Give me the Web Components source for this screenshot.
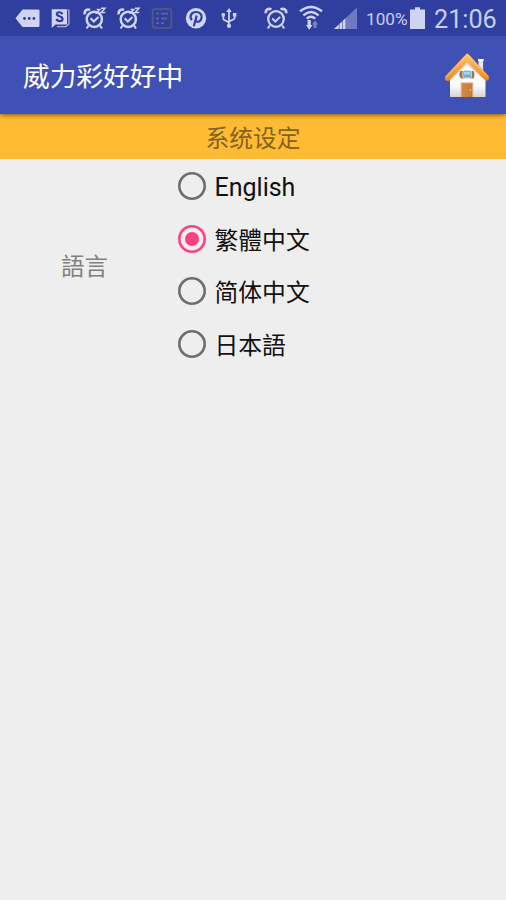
<!DOCTYPE html>
<html lang="zh">
<head>
<meta charset="utf-8">
<title>威力彩好好中</title>
<style>
html,body{margin:0;height:100%}
body{font-family:Roboto,"Noto Sans CJK SC",sans-serif;background:#eee}
</style>
</head>
<body>
<settings-screen></settings-screen>
<script>
const CLOCK = `<circle cx="12" cy="13" r="7.8" fill="none" stroke="currentColor" stroke-width="2.3"/>
<path d="M8.3 12.5l3 3 4.8-4.6M5.8 19.5l-2 3M18.2 19.5l2 3" fill="none" stroke="currentColor" stroke-width="2"/>
<path d="M1.9 7.2C1.2 3.8 4.5 1.9 7.4 3.4M22.1 7.2C22.8 3.8 19.5 1.9 16.6 3.4" fill="none" stroke="currentColor" stroke-width="2.6"/>`;
const SNOOZE = `<circle cx="11.3" cy="13.3" r="7.6" fill="none" stroke="currentColor" stroke-width="2.5"/>
<path d="M7.6 12.3l3.2 3.2 4.7-4.4M5.6 19.5l-2 3M17 19.5l2 3" fill="none" stroke="currentColor" stroke-width="2.1"/>
<path d="M1.8 8.4C1 4.8 4 2.4 7 4" fill="none" stroke="currentColor" stroke-width="2.6"/>
<path d="M13.6 3.6h3.2L13.6 7h3.4M18 2.2h4l-4 4.4h4.2" fill="none" stroke="currentColor" stroke-width="1.5"/>`;
const ICONS = {
  more: `<path d="M0 12L7 3.2h15.7q1.3 0 1.3 1.3v15q0 1.3-1.3 1.3H7z" transform="translate(-.5 .3)" fill="currentColor"/><g fill="#303f9f"><circle cx="8.5" cy="12.5" r="1.4"/><circle cx="13.2" cy="12.5" r="1.4"/><circle cx="17.9" cy="12.5" r="1.4"/></g>`,
  sheet: `<path d="M18.5 4.2h1.4V18l-3 2.6H8" fill="none" stroke="currentColor" stroke-width="1.3" opacity=".75"/><path d="M2.7 3.2H18v15.3H6.5l-3.8 3.6z" fill="currentColor"/><path d="M13.3 8.2c-.8-2.7-5.4-2.5-5.4-.2 0 2.8 5.6 1.8 5.6 5 0 2.8-5.1 3-6-.1" fill="none" stroke="#303f9f" stroke-width="2.2"/>`,
  snooze: SNOOZE,
  note: `<rect x="2.7" y="2.9" width="18.6" height="19" rx="2.5" fill="none" stroke="#4e5684" stroke-width="2"/><path d="M6 7.7h3M11 7.7h7M6 12.5h3M11 12.5h6M6 17.2h3M11 17.2h3" stroke="#5f6697" stroke-width="1.8"/>`,
  pin: `<circle cx="12" cy="12.3" r="10.2" fill="currentColor"/><path d="M7.8 14.2C4.8 10.2 7.5 6 12 6c4 0 6.2 2.6 5.6 5.7-.6 3.8-4 5.2-5.8 3.1M12.7 9.5L9.8 20.2" fill="none" stroke="#303f9f" stroke-width="2.2"/>`,
  usb: `<path d="M12 5v14M6.3 9v3.2q0 1.2 1 1.8L12 16.5M17.7 8.5v3q0 1.2-1 1.8L12 15.5" fill="none" stroke="currentColor" stroke-width="1.8"/><path d="M12 2l2.8 4.1H9.2z" fill="currentColor"/><circle cx="6.3" cy="8.8" r="1.9" fill="currentColor"/><rect x="15.9" y="7" width="3.5" height="3.5" fill="currentColor"/><circle cx="12" cy="19.9" r="2.1" fill="currentColor"/>`,
  alarm: CLOCK,
  wifi: `<g fill="none" stroke="currentColor" stroke-width="2.4"><path d="M1 5.3Q12-3.5 23 5.3"/><path d="M4.4 9.3Q12 2.9 19.6 9.3"/><path d="M7.7 12.7Q12 9 16.3 12.7"/></g><path d="M8.6 14h3.2v5h1.7l-3.3 4.7L7 19h1.6z" fill="currentColor"/><path d="M14.6 22h3v-3.5h1.6L16 14.5 13 18.5h1.6z" fill="currentColor" opacity=".45"/>`,
  signal: `<path d="M0 23L23 1.5V23z" fill="currentColor" opacity=".4"/><path d="M0 23L11.3 12.4V23z" fill="currentColor"/><path d="M5.2 17.5V23M8.6 15v8" stroke="#303f9f" stroke-width=".6"/>`,
  battery: `<path d="M6 1.3h5v2.2h5V23H1V3.5h5z" fill="currentColor"/>`
};

class StatusIcon extends HTMLElement {
  constructor(){
    super();
    const w = this.getAttribute('width') || 24;
    this.attachShadow({mode:'open'}).innerHTML = `<style>
      :host{display:flex;justify-content:center;flex:none;color:#cfd4f3}
      svg{display:block;overflow:visible}</style>
      <svg width="${w}" height="24" viewBox="0 0 ${w} 24" aria-hidden="true">${ICONS[this.getAttribute('name')]}</svg>`;
  }
}
customElements.define('status-icon', StatusIcon);

class StatusBar extends HTMLElement {
  constructor(){
    super();
    this.attachShadow({mode:'open'}).innerHTML = `<style>
      :host{display:flex;align-items:center;height:36px;box-sizing:border-box;background:#303f9f;color:#c9cff0;padding:0 11px;justify-content:space-between;position:relative;z-index:2}
      .left{display:grid;grid-template-columns:repeat(7,33.6px)}
      .right{display:flex;align-items:center}
      .pct{font-size:17.2px;line-height:24px;margin:2px 3px 0 9px;width:40px;white-space:nowrap}
      .time{font-size:25.2px;line-height:34px;margin:3px 0 0 8px;width:61px;white-space:nowrap}
      .a,.b{margin-right:11px}
    </style>
    <div class="left">
      <status-icon name="more"></status-icon><status-icon name="sheet"></status-icon>
      <status-icon name="snooze"></status-icon><status-icon name="snooze"></status-icon>
      <status-icon name="note"></status-icon><status-icon name="pin"></status-icon>
      <status-icon name="usb"></status-icon>
    </div>
    <div class="right">
      <status-icon class="a" name="alarm"></status-icon><status-icon class="b" name="wifi"></status-icon>
      <status-icon name="signal" width="23"></status-icon>
      <span class="pct">100%</span><status-icon name="battery" width="17"></status-icon>
      <span class="time">21:06</span>
    </div>`;
  }
}
customElements.define('status-bar', StatusBar);

class HomeIcon extends HTMLElement {
  constructor(){
    super();
    this.attachShadow({mode:'open'}).innerHTML = `<style>:host{display:block}svg{display:block}</style>
    <svg width="46" height="46" viewBox="0 0 46 46" role="img" aria-label="Home">
      <defs>
        <linearGradient id="w" x2="0" y2="1"><stop stop-color="#fff"/><stop offset=".7" stop-color="#fafafa"/><stop offset="1" stop-color="#d4d4d6"/></linearGradient>
        <linearGradient id="r" x2="0" y2="1"><stop stop-color="#ffc56d"/><stop offset="1" stop-color="#ee8617"/></linearGradient>
        <linearGradient id="d"><stop stop-color="#d58b48"/><stop offset="1" stop-color="#c07838"/></linearGradient>
      </defs>
      <path d="M34.5 8h4.6v14h-4.6z" fill="#e3e7ee"/><path d="M34 7h5.6v2H34z" fill="#fff"/>
      <path d="M6 23L23 9l18.5 14v22H6z" fill="url(#w)"/>
      <path d="M6 28.5L23 13l18.5 15.5v-5L23 8 6 24z" fill="#a8988c" opacity=".3"/>
      <path d="M1 24.5L22 2.2q1.3-1.2 2.6 0l20.3 22-.1 3.6-3 1.2L23.3 10.5 4.4 29.3 1 28z" fill="url(#r)"/>
      <path d="M2.3 25L22.4 4q.9-.8 1.8 0l19.3 20.5" fill="none" stroke="#ffd08a" stroke-width=".8"/>
      <path d="M16.2 19h4v7.5h-2q-2.8 0-2.8-4zM26.5 19h3q1.8 3 0 7.5h-3z" fill="#a86b35"/>
      <rect x="18.8" y="18.7" width="8.8" height="7.4" rx="1.5" fill="#72acd7" stroke="#d4d8dc"/>
      <path d="M20 20h6.4v2.6H20z" fill="#a4d5f0"/>
      <path d="M16.8 30.5h12.4V45H16.8z" fill="#e0a56c"/><path d="M18 31.5h10V45H18z" fill="url(#d)"/>
      <path d="M20 33.5h6v4h-6zM20 39h6v4h-6z" fill="none" stroke="#d0894c" stroke-width=".7"/>
      <circle cx="26.6" cy="38" r=".8" fill="#ffe08b"/>
    </svg>`;
  }
}
customElements.define('home-icon', HomeIcon);

class AppBar extends HTMLElement {
  constructor(){
    super();
    this.attachShadow({mode:'open'}).innerHTML = `<style>
      :host{display:flex;align-items:center;justify-content:space-between;height:78px;box-sizing:border-box;padding:0 16px 0 23px;background:#3f51b5;color:#fff;box-shadow:0 1px 5px rgba(0,0,0,.55);position:relative;z-index:1}
      .title{font-size:26.7px;line-height:40px;white-space:nowrap;padding-top:3px}
    </style><span class="title"><slot></slot></span><home-icon></home-icon>`;
  }
}
customElements.define('app-bar', AppBar);

class SectionHeading extends HTMLElement {
  constructor(){
    super();
    this.attachShadow({mode:'open'}).innerHTML = `<style>
      :host{display:flex;align-items:center;justify-content:center;height:45px;background:#fb3;color:#85621e;font-size:23.8px;line-height:36px}
      span{padding-top:4px}
    </style><span><slot></slot></span>`;
  }
}
customElements.define('section-heading', SectionHeading);

class RadioOption extends HTMLElement {
  constructor(){
    super();
    this.attachShadow({mode:'open'}).innerHTML = `<style>
      :host{display:flex;align-items:center;height:52.7px;gap:9px;color:#111;font-size:23.8px;line-height:36px}
      svg{display:block;flex:none;color:#6e6e6e}
      circle{fill:none;stroke:currentColor;stroke-width:2.6}
      .dot{display:none;fill:currentColor;stroke:none}
      :host([checked]) svg{color:#ff4081}
      :host([checked]) .dot{display:block}
      :host([lang=en]) span{font-size:25px}
      span{padding-top:4px}
    </style>
    <svg width="28" height="28" viewBox="0 0 28 28"><circle cx="14" cy="14" r="12.7"/><circle class="dot" cx="14" cy="14" r="7"/></svg>
    <span><slot></slot></span>`;
  }
}
customElements.define('radio-option', RadioOption);

class SettingRow extends HTMLElement {
  constructor(){
    super();
    this.attachShadow({mode:'open'}).innerHTML = `<style>
      :host{display:grid;grid-template-columns:169px 1fr;align-items:center}
      .label{text-align:center;color:#808080;font-size:23.5px;line-height:36px;padding-top:4px}
      .options{padding:.6px 0 0 8.5px}
    </style><div class="label"><slot name="label"></slot></div><div class="options"><slot></slot></div>`;
  }
}
customElements.define('setting-row', SettingRow);

class SettingsScreen extends HTMLElement {
  constructor(){
    super();
    this.attachShadow({mode:'open'}).innerHTML = `<style>
      :host{display:flex;flex-direction:column;width:506px;height:900px;overflow:hidden;background:#eee}
    </style>
    <status-bar></status-bar>
    <app-bar>威力彩好好中</app-bar>
    <section-heading>系统设定</section-heading>
    <setting-row>
      <span slot="label" lang="zh-Hant">語言</span>
      <radio-option lang="en">English</radio-option>
      <radio-option checked>繁體中文</radio-option>
      <radio-option>简体中文</radio-option>
      <radio-option>日本語</radio-option>
    </setting-row>`;
  }
}
customElements.define('settings-screen', SettingsScreen);
</script>
</body>
</html>
